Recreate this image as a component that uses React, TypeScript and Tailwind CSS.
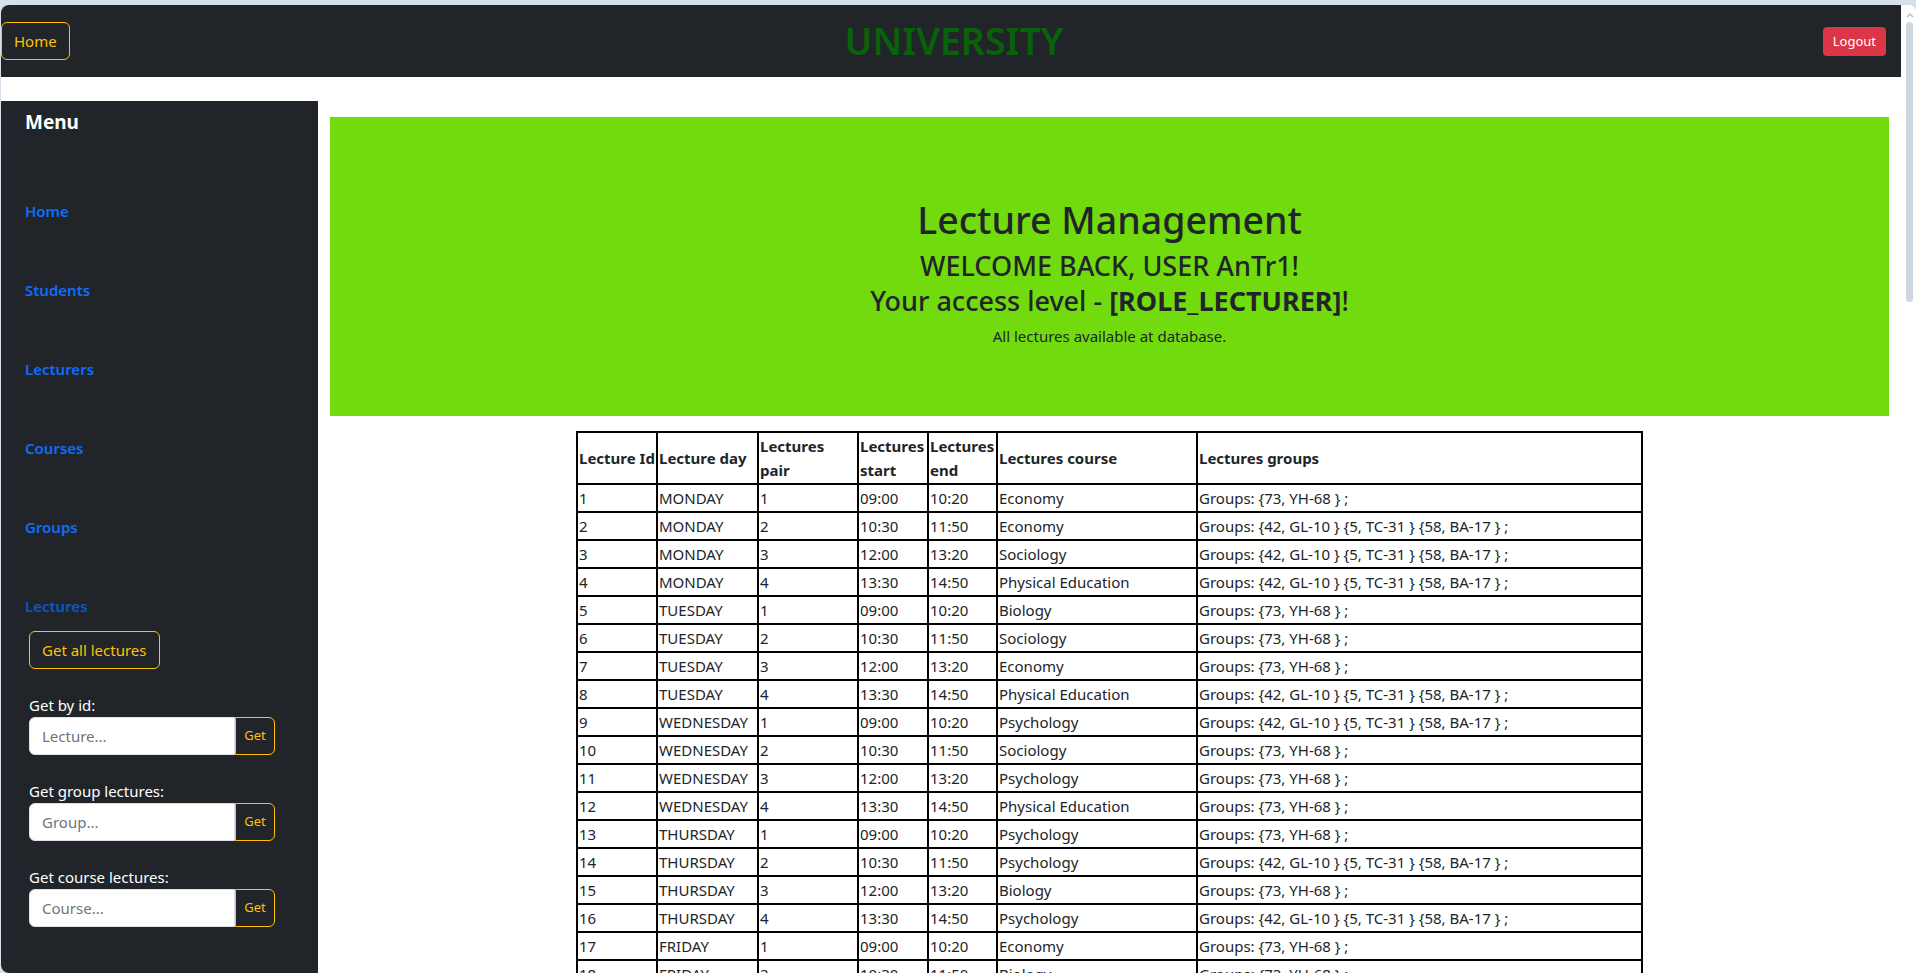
import React from "react";

const A = "Groups: {73, YH-68 } ;";
const B = "Groups: {42, GL-10 } {5, TC-31 } {58, BA-17 } ;";

const rows: [number, string, number, string, string, string, string][] = [
  [1, "MONDAY", 1, "09:00", "10:20", "Economy", A],
  [2, "MONDAY", 2, "10:30", "11:50", "Economy", B],
  [3, "MONDAY", 3, "12:00", "13:20", "Sociology", B],
  [4, "MONDAY", 4, "13:30", "14:50", "Physical Education", B],
  [5, "TUESDAY", 1, "09:00", "10:20", "Biology", A],
  [6, "TUESDAY", 2, "10:30", "11:50", "Sociology", A],
  [7, "TUESDAY", 3, "12:00", "13:20", "Economy", A],
  [8, "TUESDAY", 4, "13:30", "14:50", "Physical Education", B],
  [9, "WEDNESDAY", 1, "09:00", "10:20", "Psychology", B],
  [10, "WEDNESDAY", 2, "10:30", "11:50", "Sociology", A],
  [11, "WEDNESDAY", 3, "12:00", "13:20", "Psychology", A],
  [12, "WEDNESDAY", 4, "13:30", "14:50", "Physical Education", A],
  [13, "THURSDAY", 1, "09:00", "10:20", "Psychology", A],
  [14, "THURSDAY", 2, "10:30", "11:50", "Psychology", B],
  [15, "THURSDAY", 3, "12:00", "13:20", "Biology", A],
  [16, "THURSDAY", 4, "13:30", "14:50", "Psychology", B],
  [17, "FRIDAY", 1, "09:00", "10:20", "Economy", A],
  [18, "FRIDAY", 2, "10:30", "11:50", "Biology", A],
  [19, "FRIDAY", 3, "12:00", "13:20", "Economy", B],
  [20, "FRIDAY", 4, "13:30", "14:50", "Sociology", A],
];

function SearchBox({ label, placeholder }: { label: string; placeholder: string }) {
  return (
    <div className="mt-[25px]">
      <div className="text-[15px] leading-[23px] text-white">{label}</div>
      <div className="flex w-[246px] h-[38px]">
        <input
          className="w-[206px] h-[38px] bg-white rounded-l-[6px] border border-[#dee2e6] px-[12px] text-[15px] text-[#212529] placeholder:text-[#6c757d] outline-none"
          placeholder={placeholder}
        />
        <button className="w-[40px] h-[38px] border border-[#ffc107] rounded-r-[6px] text-[13px] text-[#ffc107] flex items-center justify-center">
          Get
        </button>
      </div>
    </div>
  );
}

const th = "border-2 border-black text-left align-middle font-bold px-[1px] py-[1px] whitespace-nowrap";

export default function App() {
  const links = ["Home", "Students", "Lecturers", "Courses", "Groups"];
  return (
    <div className="w-[1916px] h-[973px] overflow-hidden bg-[#d6e0ea] pt-[5px] pl-[1px] font-['Noto_Sans',sans-serif]">
      <div className="flex h-[968px] bg-white rounded-tl-[8px] rounded-tr-[8px] rounded-bl-[8px] overflow-hidden">
        <div className="w-[1900px] flex flex-col">
          <header className="h-[72px] shrink-0 bg-[#212529] grid grid-cols-[1fr_auto_1fr] items-center">
            <div>
              <button className="h-[38px] px-[12px] border border-[#ffc107] rounded-[6px] text-[15px] leading-[24px] text-[#ffc107]">
                Home
              </button>
            </div>
            <h1 className="text-[37.5px] leading-[48px] font-semibold text-[#096109] pl-[6px]">UNIVERSITY</h1>
            <div className="flex justify-end pr-[15px]">
              <button className="h-[29px] px-[10px] rounded-[4px] bg-[#dc3545] text-white text-[13px] leading-[21px]">
                Logout
              </button>
            </div>
          </header>
          <div className="flex flex-1 min-h-0">
            <aside className="w-[317px] shrink-0 mt-[24px] bg-[#212529] pt-[9px] pl-[24px]">
              <div className="text-[19px] leading-[24px] font-bold text-white">Menu</div>
              <nav className="mt-[65px] flex flex-col gap-[55px]">
                {links.map((l) => (
                  <a key={l} className="text-[15px] leading-[24px] font-semibold text-[#0d6efd]">
                    {l}
                  </a>
                ))}
                <a className="text-[15px] leading-[24px] font-semibold text-[#0a58ca]">Lectures</a>
              </nav>
              <div className="ml-[4px] mt-[13px]">
                <button className="h-[38px] px-[12px] border border-[#ffc107] rounded-[6px] text-[15px] leading-[24px] text-[#ffc107]">
                  Get all lectures
                </button>
                <SearchBox label="Get by id:" placeholder="Lecture..." />
                <SearchBox label="Get group lectures:" placeholder="Group..." />
                <SearchBox label="Get course lectures:" placeholder="Course..." />
              </div>
            </aside>
            <main className="flex-1 px-[12px] pt-[40px] min-w-0">
              <section className="h-[299px] bg-[#72db0e] text-center text-[#212529] pt-[79px]">
                <h1 className="text-[37.5px] leading-[48px] font-medium">Lecture Management</h1>
                <h3 className="text-[27px] leading-[35px] font-medium mt-[4px]">
                  WELCOME BACK, USER AnTr1!
                  <br />
                  Your access level - <b className="font-bold">[ROLE_LECTURER]</b>!
                </h3>
                <p className="text-[15px] leading-[24px] mt-[6px]">All lectures available at database.</p>
              </section>
              <table className="mt-[15px] mx-auto w-[1065px] table-fixed border-collapse border-2 border-black text-[15px] leading-[24px] text-[#212529]">
                <colgroup>
                  <col className="w-[80px]" />
                  <col className="w-[101px]" />
                  <col className="w-[100px]" />
                  <col className="w-[70px]" />
                  <col className="w-[69px]" />
                  <col className="w-[200px]" />
                  <col className="w-[445px]" />
                </colgroup>
                <thead>
                  <tr>
                    <th className={th}>Lecture Id</th>
                    <th className={th}>Lecture day</th>
                    <th className={th}>
                      Lectures
                      <br />
                      pair
                    </th>
                    <th className={th}>
                      Lectures
                      <br />
                      start
                    </th>
                    <th className={th}>
                      Lectures
                      <br />
                      end
                    </th>
                    <th className={th}>Lectures course</th>
                    <th className={th}>Lectures groups</th>
                  </tr>
                </thead>
                <tbody>
                  {rows.map((r) => (
                    <tr key={r[0]}>
                      {r.map((c, i) => (
                        <td key={i} className="border-2 border-black px-[1px] py-[1px] whitespace-nowrap overflow-hidden">
                          {c}
                        </td>
                      ))}
                    </tr>
                  ))}
                </tbody>
              </table>
            </main>
          </div>
        </div>
        <div className="w-[15px] shrink-0 relative bg-white">
          <svg className="absolute left-[5px] top-[7px]" width="8" height="6" viewBox="0 0 8 6">
            <path d="M1 5 L4 2 L7 5" stroke="#b4bfcb" strokeWidth="1.5" fill="none" />
          </svg>
          <div className="absolute left-[5px] top-[17px] w-[7px] h-[280px] rounded-full bg-[#cfd8e1]" />
        </div>
      </div>
    </div>
  );
}
